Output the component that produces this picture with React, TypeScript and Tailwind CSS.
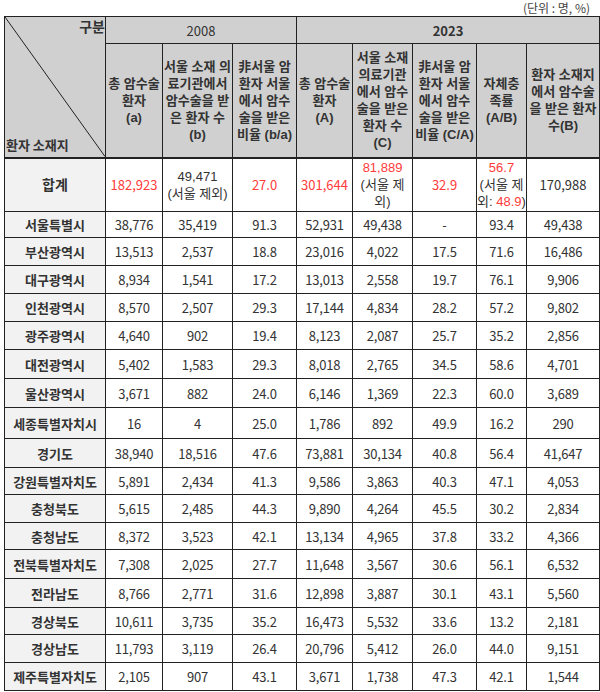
import React from 'react'

type Row = { name: string; h: number; v: string[] }

const rows: Row[] = [
  { name: '서울특별시', h: 26, v: ['38,776', '35,419', '91.3', '52,931', '49,438', '-', '93.4', '49,438'] },
  { name: '부산광역시', h: 28, v: ['13,513', '2,537', '18.8', '23,016', '4,022', '17.5', '71.6', '16,486'] },
  { name: '대구광역시', h: 28, v: ['8,934', '1,541', '17.2', '13,013', '2,558', '19.7', '76.1', '9,906'] },
  { name: '인천광역시', h: 28, v: ['8,570', '2,507', '29.3', '17,144', '4,834', '28.2', '57.2', '9,802'] },
  { name: '광주광역시', h: 28, v: ['4,640', '902', '19.4', '8,123', '2,087', '25.7', '35.2', '2,856'] },
  { name: '대전광역시', h: 29, v: ['5,402', '1,583', '29.3', '8,018', '2,765', '34.5', '58.6', '4,701'] },
  { name: '울산광역시', h: 29, v: ['3,671', '882', '24.0', '6,146', '1,369', '22.3', '60.0', '3,689'] },
  { name: '세종특별자치시', h: 31, v: ['16', '4', '25.0', '1,786', '892', '49.9', '16.2', '290'] },
  { name: '경기도', h: 29, v: ['38,940', '18,516', '47.6', '73,881', '30,134', '40.8', '56.4', '41,647'] },
  { name: '강원특별자치도', h: 27, v: ['5,891', '2,434', '41.3', '9,586', '3,863', '40.3', '47.1', '4,053'] },
  { name: '충청북도', h: 28, v: ['5,615', '2,485', '44.3', '9,890', '4,264', '45.5', '30.2', '2,834'] },
  { name: '충청남도', h: 27, v: ['8,372', '3,523', '42.1', '13,134', '4,965', '37.8', '33.2', '4,366'] },
  { name: '전북특별자치도', h: 29, v: ['7,308', '2,025', '27.7', '11,648', '3,567', '30.6', '56.1', '6,532'] },
  { name: '전라남도', h: 29, v: ['8,766', '2,771', '31.6', '12,898', '3,887', '30.1', '43.1', '5,560'] },
  { name: '경상북도', h: 27, v: ['10,611', '3,735', '35.2', '16,473', '5,532', '33.6', '13.2', '2,181'] },
  { name: '경상남도', h: 28, v: ['11,793', '3,119', '26.4', '20,796', '5,412', '26.0', '44.0', '9,151'] },
  { name: '제주특별자치도', h: 28, v: ['2,105', '907', '43.1', '3,671', '1,738', '47.3', '42.1', '1,544'] },
]

const widths = [101, 57, 70, 64, 56, 60, 64, 50, 73]

const head2 = [
  ['총 암수술', '환자', '(a)'],
  ['서울 소재 의', '료기관에서', '암수술을 받', '은 환자 수', '(b)'],
  ['非서울 암', '환자 서울', '에서 암수', '술을 받은', '비율 (b/a)'],
  ['총 암수술', '환자', '(A)'],
  ['서울 소재', '의료기관', '에서 암수', '술을 받은', '환자 수', '(C)'],
  ['非서울 암', '환자 서울', '에서 암수', '술을 받은', '비율 (C/A)'],
  ['자체충', '족률', '(A/B)'],
  ['환자 소재지', '에서 암수술', '을 받은 환자', '수(B)'],
]

const cell = 'border border-[#222] text-center align-middle p-0'
const red = 'text-[#ff3b3b]'
// 여러 줄 셀: 라틴 글꼴을 앞에 두어 줄 상자를 줄임 (한글은 CJK로 대체)
const stack = "font-['Liberation_Sans','Noto_Sans_CJK_KR',sans-serif] leading-[17px]"

export default function App() {
  return (
    <div className="w-[600px] h-[692px] bg-white text-[#333] font-['Noto_Sans_CJK_KR',sans-serif] text-[13px] leading-[17px]">
      <div className="h-4 pr-[10px] text-right text-[12px] leading-[15px] text-[#444]">(단위 : 명, %)</div>
      <table className="ml-1 w-[595px] table-fixed border-collapse">
        <colgroup>
          {widths.map((w, i) => (
            <col key={i} style={{ width: w }} />
          ))}
        </colgroup>
        <thead>
          <tr className="h-[27px]">
            <td rowSpan={2} className={`${cell} relative bg-[#d0d0d0] border-b-2`}>
              <svg className="absolute inset-0 h-full w-full" preserveAspectRatio="none" viewBox="0 0 100 100">
                <line x1="0" y1="0" x2="100" y2="100" stroke="#222" strokeWidth="1" vectorEffect="non-scaling-stroke" />
              </svg>
              <div className="absolute right-0 top-[1px] font-bold text-[14px]">구분</div>
              <div className="absolute left-[1px] bottom-[4px] font-bold text-[13px]">환자 소재지</div>
            </td>
            <td colSpan={3} className={`${cell} bg-[#d0d0d0]`}>2008</td>
            <td colSpan={5} className={`${cell} bg-[#d0d0d0] font-bold`}>2023</td>
          </tr>
          <tr className="h-[114px]">
            {head2.map((lines, i) => (
              <td key={i} className={`${cell} ${stack} bg-[#d0d0d0] border-b-2 font-bold whitespace-nowrap overflow-hidden`}>
                {lines.map((l, j) => (
                  <div key={j}>{l}</div>
                ))}
              </td>
            ))}
          </tr>
        </thead>
        <tbody>
          <tr className="h-[54px]">
            <td className={`${cell} bg-[#f2f2f2] font-bold text-[14px]`}>합계</td>
            <td className={`${cell} ${red}`}>182,923</td>
            <td className={`${cell} ${stack}`}>
              <div>49,471</div>
              <div>(서울 제외)</div>
            </td>
            <td className={`${cell} ${red}`}>27.0</td>
            <td className={`${cell} ${red}`}>301,644</td>
            <td className={`${cell} ${stack}`}>
              <div className={red}>81,889</div>
              <div>(서울 제</div>
              <div>외)</div>
            </td>
            <td className={`${cell} ${red}`}>32.9</td>
            <td className={`${cell} ${stack} whitespace-nowrap`}>
              <div className={red}>56.7</div>
              <div>(서울 제</div>
              <div>
                외: <span className={red}>48.9</span>)
              </div>
            </td>
            <td className={cell}>170,988</td>
          </tr>
          {rows.map((r) => (
            <tr key={r.name} style={{ height: r.h }}>
              <td className={`${cell} bg-[#f2f2f2] font-bold whitespace-nowrap`}>{r.name}</td>
              {r.v.map((x, i) => (
                <td key={i} className={`${cell} tracking-[-0.2px]`}>
                  {x}
                </td>
              ))}
            </tr>
          ))}
        </tbody>
      </table>
    </div>
  )
}
